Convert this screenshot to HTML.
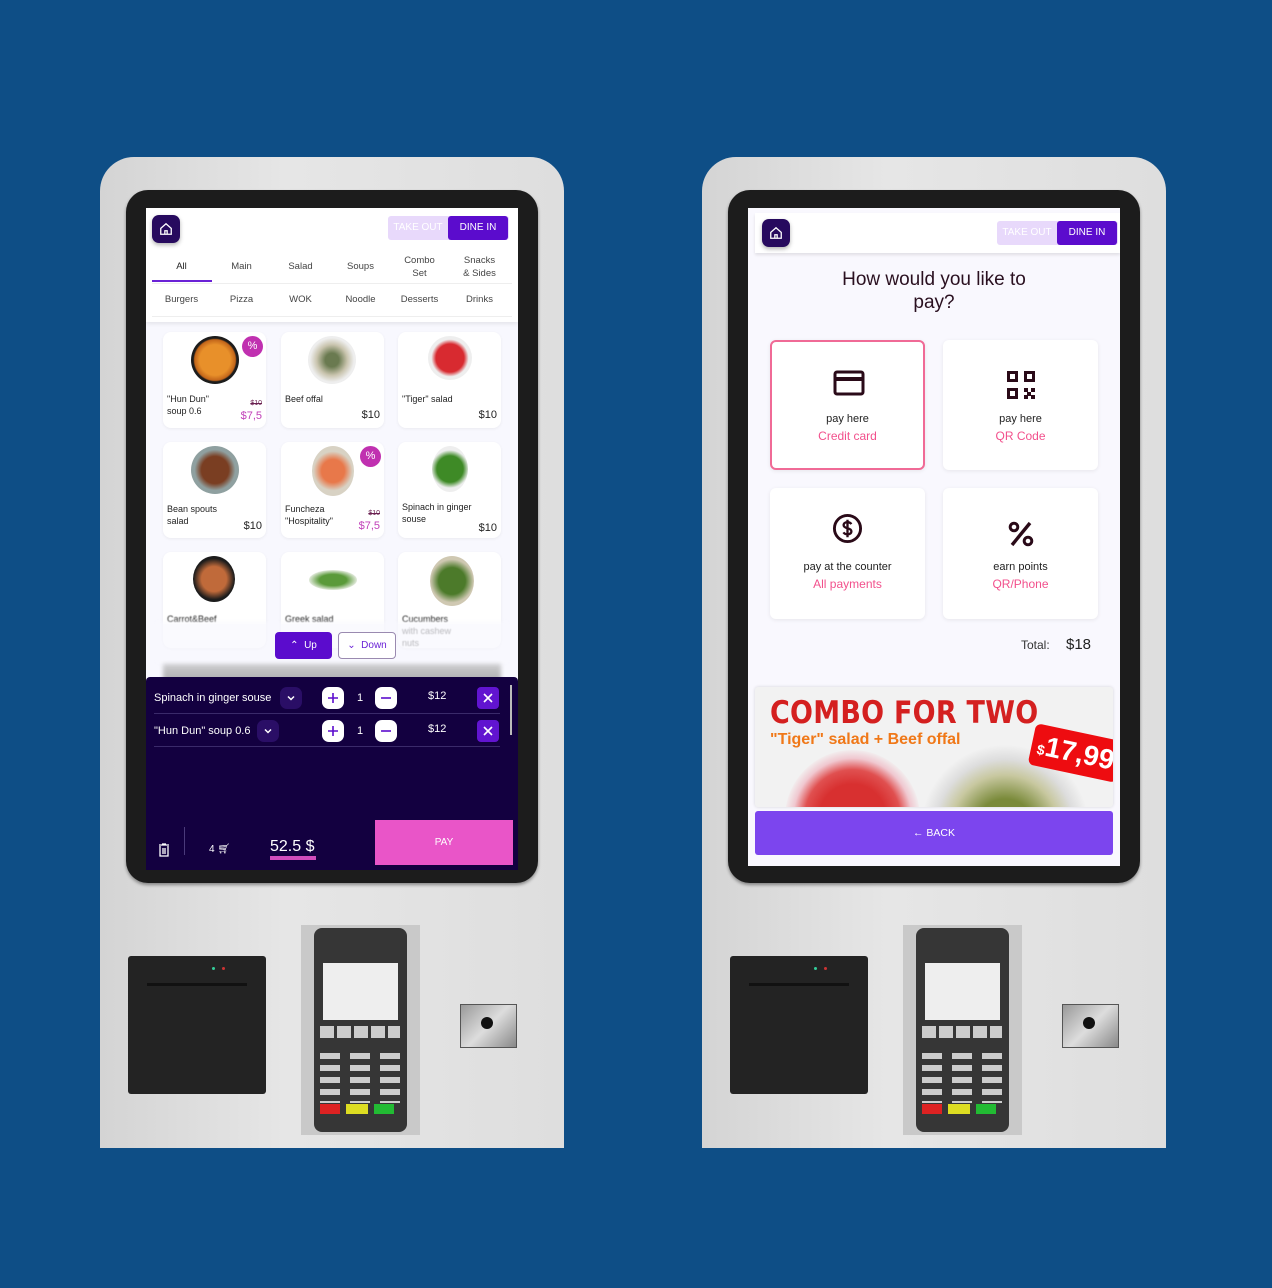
<!DOCTYPE html>
<html><head><meta charset="utf-8">
<style>
*{box-sizing:border-box;margin:0;padding:0}
body{width:1272px;height:1288px;background:#0e4e86;position:relative;overflow:hidden;font-family:"Liberation Sans",sans-serif}
.a{position:absolute}
.shell{background:linear-gradient(90deg,#d4d4d4,#e6e6e6 40%,#dedede);border-radius:34px 34px 0 0}
.bezel{background:#1c1c1c;border-radius:22px;box-shadow:0 2px 3px rgba(0,0,0,.4)}
.home{width:28px;height:28px;background:#270a5e;border-radius:7px;box-shadow:0 2px 4px rgba(0,0,0,.3);display:flex;align-items:center;justify-content:center}
.tog{height:24px;width:121px;background:#e8d9fb;border-radius:3px;font-size:10px}
.tog span{position:absolute;top:0;height:24px;line-height:24px;text-align:center;display:block}
.tab{font-size:9.5px;color:#444;text-align:center;width:59px}
.card{background:#fff;border-radius:8px;box-shadow:0 1px 3px rgba(0,0,0,.06)}
.card .n{position:absolute;left:4px;font-size:9px;color:#222;line-height:12px}
.card .p{position:absolute;right:4px;font-size:11px;color:#222}
.plate{position:absolute;border-radius:50%}
.badge{position:absolute;width:21px;height:21px;border-radius:50%;background:#c030b0;color:#fff;font-size:11px;text-align:center;line-height:21px}
.old{position:absolute;right:4px;font-size:7px;color:#6a2050;text-decoration:line-through}
.disc{position:absolute;right:4px;font-size:11px;color:#c040b8}
.ci{color:#fff;font-size:11px}
.cbtn{width:22px;height:22px;border-radius:7px;background:#fff;display:flex;align-items:center;justify-content:center}
.xbtn{width:22px;height:22px;border-radius:4px;background:#6114d0;display:flex;align-items:center;justify-content:center}
.dd{width:22px;height:22px;border-radius:7px;background:#2a0e66;display:flex;align-items:center;justify-content:center}
.pay{background:#fff;border-radius:6px;box-shadow:0 1px 4px rgba(0,0,0,.08);text-align:center}
.pay .t1{position:absolute;width:100%;top:73px;font-size:11px;color:#222}
.pay .t2{position:absolute;width:100%;top:89px;font-size:12px;color:#f2508c}
</style></head><body>

<!-- LEFT KIOSK -->
<div class="a shell" style="left:100px;top:157px;width:464px;height:991px"></div>
<div class="a bezel" style="left:126px;top:190px;width:412px;height:693px"></div>
<div class="a" style="left:146px;top:208px;width:372px;height:662px;background:#f8f8fe;overflow:hidden">
  <div class="a" style="left:0;top:0;width:372px;height:114px;background:#fff;box-shadow:0 2px 4px rgba(0,0,0,.08)"></div>
  <div class="a home" style="left:6px;top:7px"><svg width="14" height="14" viewBox="0 0 24 24" fill="none" stroke="#fff" stroke-width="2.2"><path d="M3 11L12 3l9 8v10H3z"/><path d="M10 21v-6h4v6"/></svg></div>
  <div class="a tog" style="left:242px;top:8px"><span style="left:0;width:60px;color:#fff">TAKE OUT</span><span style="left:60px;width:60px;background:#5b0ccd;color:#fff;border-radius:3px">DINE IN</span></div>
  <div class="a tab" style="left:6px;top:53px;color:#222">All</div>
  <div class="a" style="left:6px;top:72px;width:60px;height:2px;background:#6a22d6"></div>
  <div class="a tab" style="left:66px;top:53px">Main</div>
  <div class="a tab" style="left:125px;top:53px">Salad</div>
  <div class="a tab" style="left:185px;top:53px">Soups</div>
  <div class="a tab" style="left:244px;top:46px;line-height:13px">Combo<br>Set</div>
  <div class="a tab" style="left:304px;top:46px;line-height:13px">Snacks<br>&amp; Sides</div>
  <div class="a" style="left:6px;top:75px;width:360px;height:1px;background:#eee"></div>
  <div class="a tab" style="left:6px;top:86px">Burgers</div>
  <div class="a tab" style="left:66px;top:86px">Pizza</div>
  <div class="a tab" style="left:125px;top:86px">WOK</div>
  <div class="a tab" style="left:185px;top:86px">Noodle</div>
  <div class="a tab" style="left:244px;top:86px">Desserts</div>
  <div class="a tab" style="left:304px;top:86px">Drinks</div>
  <div class="a" style="left:6px;top:108px;width:360px;height:1px;background:#eee"></div>

  <!-- row 1 -->
  <div class="a card" style="left:17px;top:124px;width:103px;height:96px">
    <div class="plate" style="left:28px;top:4px;width:48px;height:48px;background:radial-gradient(circle,#e8902a 45%,#c2651a 60%,#1c1c1c 64%)"></div>
    <div class="badge" style="left:79px;top:4px">%</div>
    <div class="n" style="top:61px">"Hun Dun"<br>soup 0.6</div>
    <div class="old" style="top:68px">$10</div><div class="disc" style="top:78px">$7,5</div>
  </div>
  <div class="a card" style="left:135px;top:124px;width:103px;height:96px">
    <div class="plate" style="left:27px;top:4px;width:48px;height:48px;background:radial-gradient(circle,#6a7a50 20%,#c9c4ae 45%,#eee 65%)"></div>
    <div class="n" style="top:61px">Beef offal</div><div class="p" style="top:77px">$10</div>
  </div>
  <div class="a card" style="left:252px;top:124px;width:103px;height:96px">
    <div class="plate" style="left:30px;top:4px;width:44px;height:44px;background:radial-gradient(circle,#d82a30 45%,#eee 60%)"></div>
    <div class="n" style="top:61px">"Tiger" salad</div><div class="p" style="top:77px">$10</div>
  </div>
  <!-- row 2 -->
  <div class="a card" style="left:17px;top:234px;width:103px;height:96px">
    <div class="plate" style="left:28px;top:4px;width:48px;height:48px;background:radial-gradient(circle,#7a3e22 40%,#8fa0a0 60%)"></div>
    <div class="n" style="top:61px">Bean spouts<br>salad</div><div class="p" style="top:78px">$10</div>
  </div>
  <div class="a card" style="left:135px;top:234px;width:103px;height:96px">
    <div class="plate" style="left:31px;top:4px;width:42px;height:50px;background:radial-gradient(circle,#e8784a 35%,#d8d2c4 60%)"></div>
    <div class="badge" style="left:79px;top:4px">%</div>
    <div class="n" style="top:61px">Funcheza<br>"Hospitality"</div>
    <div class="old" style="top:68px">$10</div><div class="disc" style="top:78px">$7,5</div>
  </div>
  <div class="a card" style="left:252px;top:234px;width:103px;height:96px">
    <div class="plate" style="left:34px;top:4px;width:36px;height:46px;background:radial-gradient(circle,#3e8a26 45%,#eee 65%)"></div>
    <div class="n" style="top:59px">Spinach in ginger<br>souse</div><div class="p" style="top:80px">$10</div>
  </div>
  <!-- row 3 -->
  <div class="a card" style="left:17px;top:344px;width:103px;height:96px">
    <div class="plate" style="left:30px;top:4px;width:42px;height:46px;background:radial-gradient(circle,#c06a3a 40%,#1c1c1c 66%)"></div>
    <div class="n" style="top:61px;filter:blur(.6px)">Carrot&amp;Beef</div>
  </div>
  <div class="a card" style="left:135px;top:344px;width:103px;height:96px">
    <div class="plate" style="left:28px;top:18px;width:48px;height:20px;background:radial-gradient(ellipse,#5a9a3a 40%,#dfe8d8 70%)"></div>
    <div class="n" style="top:61px;filter:blur(.6px)">Greek salad</div>
  </div>
  <div class="a card" style="left:252px;top:344px;width:103px;height:96px">
    <div class="plate" style="left:32px;top:4px;width:44px;height:50px;background:radial-gradient(circle,#4c7a2a 40%,#cfc8b2 65%)"></div>
    <div class="n" style="top:61px;filter:blur(.6px)">Cucumbers<br>with cashew<br>nuts</div>
  </div>
  <div class="a" style="left:10px;top:414px;width:352px;height:40px;background:rgba(248,248,254,.7);filter:blur(2px)"></div>
  <div class="a" style="left:17px;top:456px;width:338px;height:20px;background:linear-gradient(#bbb,#888);filter:blur(2px);opacity:.7"></div>
  <div class="a" style="left:129px;top:424px;width:57px;height:27px;background:#5b0ccd;border-radius:4px;color:#fff;font-size:10px;line-height:27px;text-align:center">⌃ &nbsp;Up</div>
  <div class="a" style="left:192px;top:424px;width:58px;height:27px;background:#fff;border:1px solid #9a8ab0;border-radius:4px;color:#6a22d6;font-size:10px;line-height:25px;text-align:center">⌄ &nbsp;Down</div>

  <!-- cart -->
  <div class="a" style="left:0;top:469px;width:372px;height:193px;background:#130040;border-radius:4px 4px 0 0">
    <div class="a ci" style="left:8px;top:15px">Spinach in ginger souse</div>
    <div class="a dd" style="left:134px;top:10px"><svg width="10" height="10" viewBox="0 0 10 10"><path d="M2 3.5l3 3 3-3" stroke="#fff" stroke-width="1.5" fill="none"/></svg></div>
    <div class="a cbtn" style="left:176px;top:10px"><svg width="12" height="12"><path d="M6 1v10M1 6h10" stroke="#5b0ccd" stroke-width="1.6"/></svg></div>
    <div class="a ci" style="left:211px;top:15px">1</div>
    <div class="a cbtn" style="left:229px;top:10px"><svg width="12" height="12"><path d="M1 6h10" stroke="#5b0ccd" stroke-width="1.6"/></svg></div>
    <div class="a ci" style="left:282px;top:13px">$12</div>
    <div class="a xbtn" style="left:331px;top:10px"><svg width="12" height="12"><path d="M2 2l8 8M10 2l-8 8" stroke="#fff" stroke-width="1.6"/></svg></div>
    <div class="a" style="left:8px;top:36px;width:346px;height:1px;background:#3a2a6a"></div>
    <div class="a ci" style="left:8px;top:48px">"Hun Dun" soup 0.6</div>
    <div class="a dd" style="left:111px;top:43px"><svg width="10" height="10" viewBox="0 0 10 10"><path d="M2 3.5l3 3 3-3" stroke="#fff" stroke-width="1.5" fill="none"/></svg></div>
    <div class="a cbtn" style="left:176px;top:43px"><svg width="12" height="12"><path d="M6 1v10M1 6h10" stroke="#5b0ccd" stroke-width="1.6"/></svg></div>
    <div class="a ci" style="left:211px;top:48px">1</div>
    <div class="a cbtn" style="left:229px;top:43px"><svg width="12" height="12"><path d="M1 6h10" stroke="#5b0ccd" stroke-width="1.6"/></svg></div>
    <div class="a ci" style="left:282px;top:46px">$12</div>
    <div class="a xbtn" style="left:331px;top:43px"><svg width="12" height="12"><path d="M2 2l8 8M10 2l-8 8" stroke="#fff" stroke-width="1.6"/></svg></div>
    <div class="a" style="left:8px;top:69px;width:346px;height:1px;background:#3a2a6a"></div>
    <div class="a" style="left:364px;top:8px;width:2px;height:50px;background:#bbb"></div>
    <svg class="a" style="left:12px;top:166px" width="12" height="14" viewBox="0 0 12 14"><path d="M1 2h10M4 1h4M2 3v10h8V3M5 5v6M7 5v6" stroke="#fff" stroke-width="1.3" fill="none"/></svg>
    <div class="a" style="left:38px;top:150px;width:1px;height:28px;background:#4a3a7a"></div>
    <div class="a ci" style="left:63px;top:167px;font-size:10px">4 🛒︎</div>
    <div class="a" style="left:124px;top:161px;color:#fff;font-size:16px">52.5 $</div>
    <div class="a" style="left:124px;top:179px;width:46px;height:4px;background:#d04cbc"></div>
    <div class="a" style="left:229px;top:143px;width:138px;height:45px;background:#e955c8;color:#fff;font-size:10px;line-height:45px;text-align:center">PAY</div>
  </div>
</div>

<!-- RIGHT KIOSK -->
<div class="a shell" style="left:702px;top:157px;width:464px;height:991px"></div>
<div class="a bezel" style="left:728px;top:190px;width:412px;height:693px"></div>
<div class="a" style="left:748px;top:208px;width:372px;height:658px;background:#f9f8fe;overflow:hidden">
  <div class="a" style="left:7px;top:5px;width:365px;height:40px;background:#fff;box-shadow:0 2px 3px rgba(0,0,0,.1)"></div>
  <div class="a home" style="left:14px;top:11px"><svg width="14" height="14" viewBox="0 0 24 24" fill="none" stroke="#fff" stroke-width="2.2"><path d="M3 11L12 3l9 8v10H3z"/><path d="M10 21v-6h4v6"/></svg></div>
  <div class="a tog" style="left:249px;top:13px"><span style="left:0;width:60px;color:#fff">TAKE OUT</span><span style="left:60px;width:60px;background:#5b0ccd;color:#fff;border-radius:3px">DINE IN</span></div>
  <div class="a" style="left:0;top:60px;width:372px;text-align:center;font-size:19px;line-height:23px;color:#2a1020">How would you like to<br>pay?</div>
  <div class="a pay" style="left:22px;top:132px;width:155px;height:130px;border:2px solid #f06a96">
    <svg class="a" style="left:61px;top:28px" width="32" height="26" viewBox="0 0 32 26"><rect x="2" y="2" width="28" height="22" rx="2" fill="none" stroke="#2a0a18" stroke-width="3"/><rect x="2" y="7" width="28" height="4" fill="#2a0a18"/></svg>
    <div class="t1" style="top:71px">pay here</div><div class="t2" style="top:87px">Credit card</div>
  </div>
  <div class="a pay" style="left:195px;top:132px;width:155px;height:130px">
    <svg class="a" style="left:64px;top:31px" width="28" height="28" viewBox="0 0 28 28" fill="#2a0a18"><path d="M0 0h11v11H0zM3 3v5h5V3zM17 0h11v11H17zM20 3v5h5V3zM0 17h11v11H0zM3 20v5h5v-5z" fill-rule="evenodd"/><rect x="17" y="17" width="4" height="4"/><rect x="24" y="17" width="4" height="4"/><rect x="20" y="21" width="4" height="4"/><rect x="17" y="24" width="4" height="4"/><rect x="24" y="24" width="4" height="4"/></svg>
    <div class="t1">pay here</div><div class="t2">QR Code</div>
  </div>
  <div class="a pay" style="left:22px;top:280px;width:155px;height:131px">
    <svg class="a" style="left:62px;top:25px" width="31" height="31" viewBox="0 0 32 32"><circle cx="16" cy="16" r="13.5" fill="none" stroke="#2a0a18" stroke-width="3"/><path d="M20 11.5c-1-1.5-2.5-2-4-2-2.5 0-4 1.2-4 3s1.5 2.6 4 3.2 4 1.4 4 3.3-1.6 3-4 3c-1.7 0-3.3-.7-4.2-2M16 7v18" fill="none" stroke="#2a0a18" stroke-width="2.4"/></svg>
    <div class="t1">pay at the counter</div><div class="t2">All payments</div>
  </div>
  <div class="a pay" style="left:195px;top:280px;width:155px;height:131px">
    <svg class="a" style="left:65px;top:33px" width="26" height="26" viewBox="0 0 26 26"><circle cx="6" cy="6" r="3.8" fill="none" stroke="#2a0a18" stroke-width="3"/><circle cx="20" cy="20" r="3.8" fill="none" stroke="#2a0a18" stroke-width="3"/><path d="M22 2L4 24" stroke="#2a0a18" stroke-width="3.4"/></svg>
    <div class="t1">earn points</div><div class="t2">QR/Phone</div>
  </div>
  <div class="a" style="left:273px;top:430px;font-size:12px;color:#333">Total:</div>
  <div class="a" style="left:318px;top:428px;font-size:15px;color:#222">$18</div>
  <!-- banner -->
  <div class="a" style="left:7px;top:479px;width:358px;height:120px;background:#f2f2f2;border-radius:3px;overflow:hidden;box-shadow:0 0 3px rgba(0,0,0,.15)">
    <div class="plate" style="left:30px;top:63px;width:135px;height:135px;background:radial-gradient(circle,#d83030 35%,#e05050 50%,#f0c8d0 62%,#f2f2f2 72%)"></div>
    <div class="plate" style="left:165px;top:57px;width:170px;height:170px;background:radial-gradient(circle,#7a8a3a 25%,#c8c8a0 45%,#ddd 58%,#f2f2f2 70%)"></div>
    <div class="a" style="left:15px;top:8px;font-size:31px;font-weight:bold;color:#d42020;letter-spacing:.3px;font-family:'DejaVu Sans',sans-serif;transform:scaleX(.87);transform-origin:left">COMBO FOR TWO</div>
    <div class="a" style="left:15px;top:44px;font-size:16px;font-weight:bold;color:#f07818">"Tiger" salad + Beef offal</div>
    <div class="a" style="left:276px;top:45px;width:90px;height:42px;background:#ee0c10;border-radius:6px;transform:rotate(12deg);color:#fff;font-size:28px;font-weight:bold;line-height:42px;padding-left:6px;white-space:nowrap"><span style="font-size:14px">$</span>17,99</div>
  </div>
  <div class="a" style="left:7px;top:603px;width:358px;height:44px;background:#7c45ee;border-radius:3px;color:#fff;font-size:10.5px;line-height:44px;text-align:center">← BACK</div>
</div>

<!-- HARDWARE left -->
<div class="a" style="left:128px;top:956px;width:138px;height:138px;background:#232323;border-radius:3px"></div>
<div class="a" style="left:147px;top:983px;width:100px;height:3px;background:#111"></div>
<div class="a" style="left:212px;top:967px;width:3px;height:3px;border-radius:50%;background:#3c9"></div>
<div class="a" style="left:222px;top:967px;width:3px;height:3px;border-radius:50%;background:#c33"></div>
<div class="a" style="left:301px;top:925px;width:119px;height:210px;background:#c9c9c9"></div>
<div class="a" style="left:314px;top:928px;width:93px;height:204px;background:#363636;border-radius:8px"></div>
<div class="a" style="left:323px;top:963px;width:75px;height:57px;background:#eee"></div>
<div class="a" style="left:320px;top:1026px;width:80px;height:12px;background:repeating-linear-gradient(90deg,#ccc 0 14px,#363636 14px 17px)"></div>
<div class="a" style="left:320px;top:1053px;width:80px;height:50px;background:repeating-linear-gradient(#ccc 0 6px,#363636 6px 12px);-webkit-mask:repeating-linear-gradient(90deg,#000 0 20px,transparent 20px 30px)"></div>
<div class="a" style="left:320px;top:1104px;width:20px;height:10px;background:#d22"></div>
<div class="a" style="left:346px;top:1104px;width:22px;height:10px;background:#dd2"></div>
<div class="a" style="left:374px;top:1104px;width:20px;height:10px;background:#2b3"></div>
<div class="a" style="left:460px;top:1004px;width:57px;height:44px;background:linear-gradient(135deg,#999,#ddd 50%,#888);border:1px solid #555"></div>
<div class="a" style="left:481px;top:1017px;width:12px;height:12px;border-radius:50%;background:#111"></div>

<!-- HARDWARE right -->
<div class="a" style="left:730px;top:956px;width:138px;height:138px;background:#232323;border-radius:3px"></div>
<div class="a" style="left:749px;top:983px;width:100px;height:3px;background:#111"></div>
<div class="a" style="left:814px;top:967px;width:3px;height:3px;border-radius:50%;background:#3c9"></div>
<div class="a" style="left:824px;top:967px;width:3px;height:3px;border-radius:50%;background:#c33"></div>
<div class="a" style="left:903px;top:925px;width:119px;height:210px;background:#c9c9c9"></div>
<div class="a" style="left:916px;top:928px;width:93px;height:204px;background:#363636;border-radius:8px"></div>
<div class="a" style="left:925px;top:963px;width:75px;height:57px;background:#eee"></div>
<div class="a" style="left:922px;top:1026px;width:80px;height:12px;background:repeating-linear-gradient(90deg,#ccc 0 14px,#363636 14px 17px)"></div>
<div class="a" style="left:922px;top:1053px;width:80px;height:50px;background:repeating-linear-gradient(#ccc 0 6px,#363636 6px 12px);-webkit-mask:repeating-linear-gradient(90deg,#000 0 20px,transparent 20px 30px)"></div>
<div class="a" style="left:922px;top:1104px;width:20px;height:10px;background:#d22"></div>
<div class="a" style="left:948px;top:1104px;width:22px;height:10px;background:#dd2"></div>
<div class="a" style="left:976px;top:1104px;width:20px;height:10px;background:#2b3"></div>
<div class="a" style="left:1062px;top:1004px;width:57px;height:44px;background:linear-gradient(135deg,#999,#ddd 50%,#888);border:1px solid #555"></div>
<div class="a" style="left:1083px;top:1017px;width:12px;height:12px;border-radius:50%;background:#111"></div>
</body></html>
